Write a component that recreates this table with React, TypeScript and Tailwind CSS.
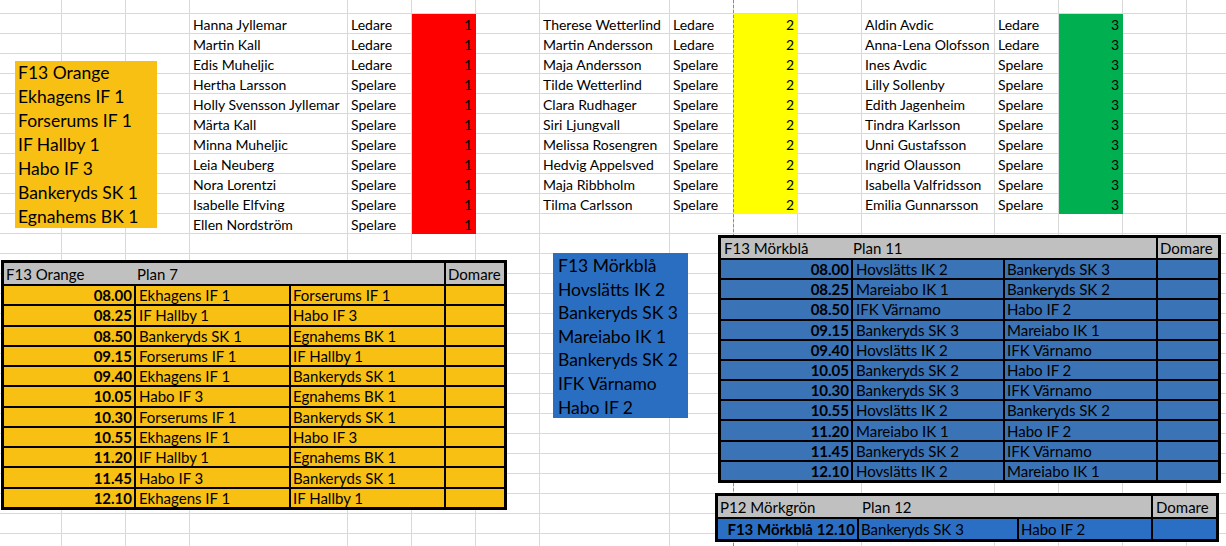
const colWidths = 16;
const rowCount = 28;

const group1: [string, string][] = [
  ["Hanna Jyllemar", "Ledare"],
  ["Martin Kall", "Ledare"],
  ["Edis Muheljic", "Ledare"],
  ["Hertha Larsson", "Spelare"],
  ["Holly Svensson Jyllemar", "Spelare"],
  ["Märta Kall", "Spelare"],
  ["Minna Muheljic", "Spelare"],
  ["Leia Neuberg", "Spelare"],
  ["Nora Lorentzi", "Spelare"],
  ["Isabelle Elfving", "Spelare"],
  ["Ellen Nordström", "Spelare"],
];

const group2: [string, string][] = [
  ["Therese Wetterlind", "Ledare"],
  ["Martin Andersson", "Ledare"],
  ["Maja Andersson", "Spelare"],
  ["Tilde Wetterlind", "Spelare"],
  ["Clara Rudhager", "Spelare"],
  ["Siri Ljungvall", "Spelare"],
  ["Melissa Rosengren", "Spelare"],
  ["Hedvig Appelsved", "Spelare"],
  ["Maja Ribbholm", "Spelare"],
  ["Tilma Carlsson", "Spelare"],
];

const group3: [string, string][] = [
  ["Aldin Avdic", "Ledare"],
  ["Anna-Lena Olofsson", "Ledare"],
  ["Ines Avdic", "Spelare"],
  ["Lilly Sollenby", "Spelare"],
  ["Edith Jagenheim", "Spelare"],
  ["Tindra Karlsson", "Spelare"],
  ["Unni Gustafsson", "Spelare"],
  ["Ingrid Olausson", "Spelare"],
  ["Isabella Valfridsson", "Spelare"],
  ["Emilia Gunnarsson", "Spelare"],
];

const orangeGames: [string, string, string][] = [
  ["08.00", "Ekhagens IF 1", "Forserums IF 1"],
  ["08.25", "IF Hallby 1", "Habo IF 3"],
  ["08.50", "Bankeryds SK 1", "Egnahems BK 1"],
  ["09.15", "Forserums IF 1", "IF Hallby 1"],
  ["09.40", "Ekhagens IF 1", "Bankeryds SK 1"],
  ["10.05", "Habo IF 3", "Egnahems BK 1"],
  ["10.30", "Forserums IF 1", "Bankeryds SK 1"],
  ["10.55", "Ekhagens IF 1", "Habo IF 3"],
  ["11.20", "IF Hallby 1", "Egnahems BK 1"],
  ["11.45", "Habo IF 3", "Bankeryds SK 1"],
  ["12.10", "Ekhagens IF 1", "IF Hallby 1"],
];

const blueGames: [string, string, string][] = [
  ["08.00", "Hovslätts IK 2", "Bankeryds SK 3"],
  ["08.25", "Mareiabo IK 1", "Bankeryds SK 2"],
  ["08.50", "IFK Värnamo", "Habo IF 2"],
  ["09.15", "Bankeryds SK 3", "Mareiabo IK 1"],
  ["09.40", "Hovslätts IK 2", "IFK Värnamo"],
  ["10.05", "Bankeryds SK 2", "Habo IF 2"],
  ["10.30", "Bankeryds SK 3", "IFK Värnamo"],
  ["10.55", "Hovslätts IK 2", "Bankeryds SK 2"],
  ["11.20", "Mareiabo IK 1", "Habo IF 2"],
  ["11.45", "Bankeryds SK 2", "IFK Värnamo"],
  ["12.10", "Hovslätts IK 2", "Mareiabo IK 1"],
];

const orangeTeams = [
  "F13 Orange",
  "Ekhagens IF 1",
  "Forserums IF 1",
  "IF Hallby 1",
  "Habo IF 3",
  "Bankeryds SK 1",
  "Egnahems BK 1",
];

const blueTeams = [
  "F13 Mörkblå",
  "Hovslätts IK 2",
  "Bankeryds SK 3",
  "Mareiabo IK 1",
  "Bankeryds SK 2",
  "IFK Värnamo",
  "Habo IF 2",
];

type Cell = { text?: string; num?: boolean; fill?: string };

// which cell holds what, rows counted from the partial top row
function cellAt(r: number, c: number): Cell {
  const i = r - 1;
  if (i >= 0 && i < group1.length) {
    if (c === 3) return { text: group1[i][0] };
    if (c === 4) return { text: group1[i][1] };
    if (c === 5) return { text: "1", num: true, fill: "bg-[#ff0000] border-[#ff0000]" };
  }
  if (i >= 0 && i < group2.length) {
    if (c === 7) return { text: group2[i][0] };
    if (c === 8) return { text: group2[i][1] };
    if (c === 9) return { text: "2", num: true, fill: "bg-[#ffff00] border-[#ffff00]" };
  }
  if (i >= 0 && i < group3.length) {
    if (c === 11) return { text: group3[i][0] };
    if (c === 12) return { text: group3[i][1] };
    if (c === 13) return { text: "3", num: true, fill: "bg-[#00b050] border-[#00b050]" };
  }
  return {};
}

function Sheet() {
  const cells = [];
  for (let r = 0; r < rowCount; r++) {
    for (let c = 0; c < colWidths; c++) {
      const cell = cellAt(r, c);
      cells.push(
        <div
          key={`${r}-${c}`}
          className={`border-b border-r whitespace-nowrap px-[3px] pt-[1px] leading-[19px] ${
            cell.fill ?? "border-[#d9d9d9]"
          } ${cell.num ? "text-right" : ""}`}
        >
          {cell.text}
        </div>
      );
    }
  }
  return (
    <div className="-mt-[6px] grid auto-rows-[20px] grid-cols-[62px_64px_64px_158px_64px_64px_64px_130px_64px_64px_64px_133px_64px_64px_64px_40px]">
      {cells}
    </div>
  );
}

export default function App() {
  return (
    <div className="relative h-[546px] w-[1226px] overflow-hidden bg-white font-['Lato',sans-serif] text-[14px] text-black">
      <Sheet />

      {/* page break line */}
      <div className="absolute left-[733px] top-0 h-full border-l border-dashed border-[#8a8a8a]" />

      {/* F13 Orange text box */}
      <div className="absolute left-[15px] top-[61px] flex h-[167px] w-[142px] flex-col bg-[#f8c013] px-[3px] text-[17.5px] leading-[24px]">
        {orangeTeams.map((t) => (
          <span key={t}>{t}</span>
        ))}
      </div>

      {/* F13 Mörkblå text box */}
      <div className="absolute left-[553px] top-[253px] flex h-[165px] w-[135px] flex-col bg-[#2a6ec2] px-[5px] pt-[1px] text-[17.5px] leading-[23.6px]">
        {blueTeams.map((t) => (
          <span key={t}>{t}</span>
        ))}
      </div>

      {/* Plan 7 */}
      <div className="absolute left-[1px] top-[260px] grid h-[250px] w-[506px] grid-cols-[130px_153px_153px_1fr] grid-rows-[21px_repeat(11,1fr)] gap-[2px] border-[3px] border-black bg-black text-[15px] leading-[18px]">
        <div className="col-span-3 flex items-center bg-[#c0c0c0]">
          <span className="w-[133px] pl-[2px]">F13 Orange</span>
          <span>Plan 7</span>
        </div>
        <div className="flex items-center bg-[#c0c0c0] pl-[2px]">Domare</div>
        {orangeGames.map(([t, a, b]) => (
          <div key={t} className="contents">
            <div className="flex items-center justify-end bg-[#f8c013] pr-[2px] font-bold">{t}</div>
            <div className="flex items-center bg-[#f8c013] pl-[3px]">{a}</div>
            <div className="flex items-center bg-[#f8c013] pl-[2px]">{b}</div>
            <div className="bg-[#f8c013]" />
          </div>
        ))}
      </div>

      {/* Plan 11 */}
      <div className="absolute left-[718px] top-[235px] grid h-[248px] w-[503px] grid-cols-[130px_150px_151px_1fr] grid-rows-[20px_repeat(11,1fr)] gap-[2px] border-[3px] border-black bg-black text-[15px] leading-[18px]">
        <div className="col-span-3 flex items-center bg-[#c0c0c0]">
          <span className="w-[132px] pl-[3px]">F13 Mörkblå</span>
          <span>Plan 11</span>
        </div>
        <div className="flex items-center bg-[#c0c0c0] pl-[2px]">Domare</div>
        {blueGames.map(([t, a, b]) => (
          <div key={t} className="contents">
            <div className="flex items-center justify-end bg-[#3b73b7] pr-[2px] font-bold">{t}</div>
            <div className="flex items-center bg-[#3b73b7] pl-[3px]">{a}</div>
            <div className="flex items-center bg-[#3b73b7] pl-[2px]">{b}</div>
            <div className="bg-[#3b73b7]" />
          </div>
        ))}
      </div>

      {/* Plan 12 */}
      <div className="absolute left-[715px] top-[493px] grid h-[49px] w-[504px] grid-cols-[139px_158px_132px_1fr] grid-rows-[21px_20px] gap-[2px] border-[3px] border-black bg-black text-[15px] leading-[18px]">
        <div className="col-span-3 flex items-center bg-[#c0c0c0]">
          <span className="w-[144px] pl-[2px]">P12 Mörkgrön</span>
          <span>Plan 12</span>
        </div>
        <div className="flex items-center bg-[#c0c0c0] pl-[3px]">Domare</div>
        <div className="flex items-center justify-end bg-[#2b6fc5] pr-[2px] font-bold">F13 Mörkblå 12.10</div>
        <div className="flex items-center bg-[#2b6fc5] pl-[2px]">Bankeryds SK 3</div>
        <div className="flex items-center bg-[#2b6fc5] pl-[2px]">Habo IF 2</div>
        <div className="bg-[#2b6fc5]" />
      </div>
    </div>
  );
}
